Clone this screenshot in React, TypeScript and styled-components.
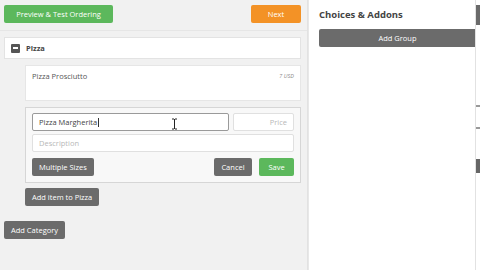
import React from 'react';
import styled, { createGlobalStyle, css } from 'styled-components';

const GlobalStyle = createGlobalStyle`
  html, body {
    margin: 0;
    padding: 0;
    width: 480px;
    height: 270px;
    overflow: hidden;
    background: #f1f1f1;
    font-family: "Open Sans", "Liberation Sans", sans-serif;
  }
`;

const Page = styled.div`
  display: flex;
  width: 480px;
  height: 270px;
`;

const LeftPanel = styled.div`
  width: 307px;
  background: #f1f1f1;
  border-right: 1px solid #e2e2e2;
  box-shadow: 1px 0 0 #fafafa;
  display: flex;
  flex-direction: column;
`;

const TopBar = styled.div`
  display: flex;
  justify-content: space-between;
  align-items: flex-start;
  padding: 5px 6px 0 4px;
  height: 25px;
  border-bottom: 1px solid #e6e6e6;
`;

const Body = styled.div`
  display: flex;
  flex-direction: column;
  padding: 6px 6px 0 4px;
`;

const Btn = styled.button<{ $tone?: 'green' | 'orange' | 'gray' }>`
  border: none;
  border-radius: 2px;
  font-family: "Open Sans", "Liberation Sans", sans-serif;
  font-size: 7.5px;
  color: #fff;
  height: 18px;
  padding: 0 7px;
  cursor: pointer;
  white-space: nowrap;
  ${({ $tone }) =>
    $tone === 'green'
      ? css`background: #5cb85c;`
      : $tone === 'orange'
      ? css`background: #f39226;`
      : css`background: #6b6b6b;`}
`;

const CategoryCard = styled.div`
  display: flex;
  align-items: center;
  height: 20px;
  background: #fff;
  border: 1px solid #e3e3e3;
  padding-left: 6px;
  gap: 6px;
  font-size: 7.5px;
  font-weight: 700;
  color: #444;
`;

const MinusIcon = styled.span`
  width: 9px;
  height: 9px;
  border-radius: 1px;
  background: #555;
  display: flex;
  align-items: center;
  justify-content: center;
  &::after {
    content: '';
    width: 5px;
    height: 1.5px;
    background: #fff;
  }
`;

const Items = styled.div`
  display: flex;
  flex-direction: column;
  margin-left: 21px;
  margin-top: 6px;
`;

const ItemCard = styled.div`
  height: 36px;
  background: #fff;
  border: 1px solid #e6e6e6;
  display: flex;
  justify-content: space-between;
  align-items: flex-start;
  padding: 5px 6px 0 6px;
  box-sizing: border-box;
  font-size: 7.5px;
  color: #555;
`;

const Price = styled.span`
  font-size: 5.5px;
  font-style: italic;
  color: #888;
  margin-top: 1px;
`;

const EditForm = styled.div`
  margin-top: 6px;
  background: #f8f8f8;
  border: 1px solid #d6d6d6;
  padding: 5px 6px 6px 6px;
  display: flex;
  flex-direction: column;
  gap: 3px;
  position: relative;
`;

const InputRow = styled.div`
  display: flex;
  gap: 4px;
`;

const Field = styled.div<{ $focus?: boolean; $w?: number; $right?: boolean; $ph?: boolean }>`
  height: 18px;
  flex-shrink: 0;
  box-sizing: border-box;
  background: #fff;
  border: 1px solid ${({ $focus }) => ($focus ? '#9a9a9a' : '#e0e0e0')};
  border-radius: 2px;
  display: flex;
  align-items: center;
  padding: 0 6px;
  font-size: 7.5px;
  color: ${({ $ph }) => ($ph ? '#b8b8b8' : '#444')};
  justify-content: ${({ $right }) => ($right ? 'flex-end' : 'flex-start')};
  ${({ $w }) => ($w ? css`width: ${$w}px;` : css`flex-grow: 1;`)}
`;

const Caret = styled.span`
  display: inline-block;
  width: 1px;
  height: 9px;
  background: #333;
  margin-left: 0.5px;
`;

const ActionRow = styled.div`
  display: flex;
  align-items: center;
  margin-top: 3px;
  gap: 7px;
`;

const Spacer = styled.div`
  flex: 1;
`;

const BelowBtn = styled.div<{ $mt: number }>`
  display: flex;
  margin-top: ${({ $mt }) => $mt}px;
`;

const CursorMark = styled.svg`
  position: absolute;
  left: 145px;
  top: 10px;
`;

const RightPanel = styled.div`
  width: 167px;
  background: #fff;
  border-left: 1px solid #e8e8e8;
  padding: 8px 0 0 10px;
  box-sizing: border-box;
`;

const Title = styled.div`
  font-size: 9.5px;
  font-weight: 700;
  color: #444;
  margin-bottom: 8px;
`;

const WideBtn = styled(Btn)`
  width: 157px;
  display: block;
  border-radius: 2px 0 0 2px;
`;

const EdgeStrip = styled.div`
  width: 4px;
  background: #fff;
  border-left: 1px solid #e2e2e2;
  display: flex;
  flex-direction: column;
  padding-top: 5px;
`;

const EdgeBlock = styled.div<{ $h: number; $mt?: number; $c?: string }>`
  height: ${({ $h }) => $h}px;
  margin-top: ${({ $mt }) => $mt ?? 0}px;
  background: ${({ $c }) => $c ?? '#555'};
`;

export default function App() {
  return (
    <>
      <GlobalStyle />
      <Page>
        <LeftPanel>
          <TopBar>
            <Btn $tone="green" style={{ width: 109 }}>Preview &amp; Test Ordering</Btn>
            <Btn $tone="orange" style={{ width: 50 }}>Next</Btn>
          </TopBar>
          <Body>
            <CategoryCard>
              <MinusIcon />
              Pizza
            </CategoryCard>
            <Items>
              <ItemCard>
                <span>Pizza Prosciutto</span>
                <Price>7 USD</Price>
              </ItemCard>
              <EditForm>
                <InputRow>
                  <Field $focus>
                    Pizza Margherita<Caret />
                  </Field>
                  <Field $w={61} $right $ph>
                    Price
                  </Field>
                </InputRow>
                <Field $ph>Description</Field>
                <ActionRow>
                  <Btn>Multiple Sizes</Btn>
                  <Spacer />
                  <Btn style={{ width: 38 }}>Cancel</Btn>
                  <Btn $tone="green" style={{ width: 35 }}>Save</Btn>
                </ActionRow>
                <CursorMark width="7" height="12" viewBox="0 0 7 12">
                  <path d="M1 1h2M4 1h2M3.5 1v10M1 11h2M4 11h2" stroke="#222" strokeWidth="1" fill="none" />
                </CursorMark>
              </EditForm>
              <BelowBtn $mt={5}>
                <Btn>Add item to Pizza</Btn>
              </BelowBtn>
            </Items>
            <BelowBtn $mt={15}>
              <Btn>Add Category</Btn>
            </BelowBtn>
          </Body>
        </LeftPanel>
        <RightPanel>
          <Title>Choices &amp; Addons</Title>
          <WideBtn>Add Group</WideBtn>
        </RightPanel>
        <EdgeStrip>
          <EdgeBlock $h={20} $c="#6a6a6a" />
          <EdgeBlock $h={2} $mt={80} $c="#999" />
          <EdgeBlock $h={2} $mt={20} $c="#999" />
          <EdgeBlock $h={14} $mt={30} $c="#666" />
        </EdgeStrip>
      </Page>
    </>
  );
}
